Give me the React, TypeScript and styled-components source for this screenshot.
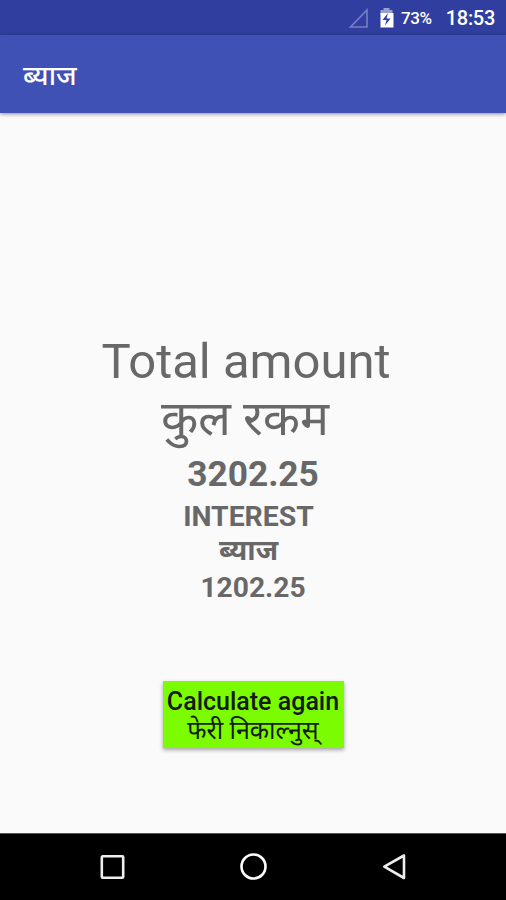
import React from 'react';
import styled, { createGlobalStyle } from 'styled-components';

const Global = createGlobalStyle`
  body { margin: 0; }
`;

const Screen = styled.div`
  width: 506px;
  height: 900px;
  display: flex;
  flex-direction: column;
  overflow: hidden;
  background: #fafafa;
  color: #686868;
  font-family: Roboto, "Noto Sans", "Noto Sans Devanagari", sans-serif;
`;

const StatusBar = styled.div`
  height: 35px;
  flex: none;
  box-sizing: border-box;
  display: flex;
  align-items: center;
  justify-content: flex-end;
  padding-right: 11px;
  background: #303f9f;
  color: #fff;
  svg { display: block; }
`;

const Battery = styled.span`
  font-size: 17px;
  font-weight: 500;
  letter-spacing: -0.4px;
  line-height: 36px;
  margin: 0 14px 0 7px;
`;

const Clock = styled.span`
  font-size: 20px;
  letter-spacing: -0.3px;
  line-height: 37px;
  padding-top: 1px;
  font-weight: 500;
`;

const AppBar = styled.div`
  height: 78px;
  flex: none;
  box-sizing: border-box;
  display: flex;
  align-items: center;
  padding: 3px 23px 0;
  background: #3f51b5;
  box-shadow: 0 1px 4px rgba(0, 0, 0, 0.45);
`;

const Title = styled.span`
  color: #fff;
  font-size: 27.3px;
  line-height: 36px;
  font-weight: 500;
`;

const Content = styled.main`
  flex: 1;
  display: flex;
  flex-direction: column;
  align-items: center;
  padding-top: 220px;
`;

const Line = styled.div<{ $size: number; $height: number; $bold?: boolean; $shift?: number }>`
  font-size: ${(p) => p.$size}px;
  line-height: ${(p) => p.$height}px;
  height: ${(p) => p.$height}px;
  font-weight: ${(p) => (p.$bold ? 700 : 400)};
  padding-right: ${(p) => p.$shift ?? 0}px;
  white-space: nowrap;
`;

const Again = styled.button`
  margin-top: 75px;
  width: 181px;
  height: 67px;
  padding: 6px 0 0;
  border: 0;
  display: flex;
  flex-direction: column;
  align-items: center;
  background: #7cfc00;
  color: #151b10;
  font: 500 25px/30px Roboto, "Noto Sans", sans-serif;
  white-space: nowrap;
  box-shadow: 0 2px 4px rgba(0, 0, 0, 0.35);
`;

const AgainNepali = styled.span`
  font-weight: 400;
  line-height: 28px;
`;

const NavBar = styled.nav`
  height: 67px;
  flex: none;
  box-sizing: border-box;
  display: flex;
  justify-content: center;
  align-items: center;
  gap: 109px;
  background: #000;
  border-top: 1px solid #555;
`;

export default function App() {
  return (
    <Screen>
      <Global />
      <StatusBar>
        <svg width="48" height="24" viewBox="0 0 48 24">
          <path d="M21 4V21H4.5Z" fill="none" stroke="#7480c8" strokeWidth="1.6" />
          <path d="M34.5 4h3V2h6v2h3v5h-12Z" fill="#98a0d2" />
          <path d="M34.5 7h13v14.5h-13Z" fill="#fff" />
          <path d="M42 7l-5.5 7h4l-1.5 5.5 5.5-7h-4Z" fill="#303f9f" />
        </svg>
        <Battery>73%</Battery>
        <Clock>18:53</Clock>
      </StatusBar>
      <AppBar><Title>ब्याज</Title></AppBar>
      <Content>
        <Line $size={49} $height={58} $shift={14}>Total amount</Line>
        <Line $size={48.5} $height={56} $shift={16}>कुल रकम</Line>
        <Line $size={35.3} $height={54} $bold>3202.25</Line>
        <Line $size={28.4} $height={32} $bold $shift={9}>INTEREST</Line>
        <Line $size={28.5} $height={36} $bold $shift={9}>ब्याज</Line>
        <Line $size={28.2} $height={37} $bold>1202.25</Line>
        <Again><span>Calculate again</span><AgainNepali>फेरी निकाल्नुस्</AgainNepali></Again>
      </Content>
      <NavBar>
        <svg width="32" height="32" viewBox="0 0 32 32"><rect x="5.8" y="5.3" width="21.4" height="21.4" rx="1" fill="none" stroke="#eee" strokeWidth="2.6" /></svg>
        <svg width="32" height="32" viewBox="0 0 32 32"><circle cx="16.5" cy="15.5" r="12" fill="none" stroke="#fff" strokeWidth="2.6" /></svg>
        <svg width="32" height="32" viewBox="0 0 32 32"><path d="M26 4.5V27L6.3 15.7Z" fill="none" stroke="#eee" strokeWidth="2.6" strokeLinejoin="round" /></svg>
      </NavBar>
    </Screen>
  );
}
